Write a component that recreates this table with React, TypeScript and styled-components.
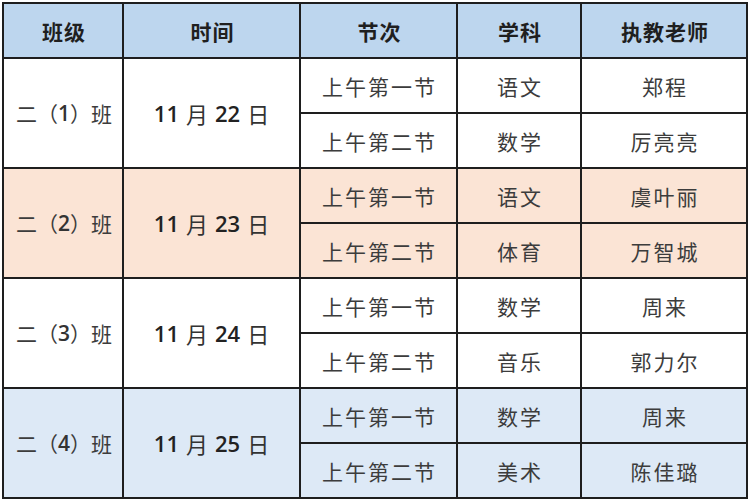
import React from "react";
import styled, { createGlobalStyle } from "styled-components";

const Global = createGlobalStyle`
  html, body { margin: 0; padding: 0; background: #ffffff; }
  body { font-family: "Noto Sans CJK SC", "Noto Sans", sans-serif; }
`;

type Tone = "white" | "pink" | "blue" | "head";

const toneColor: Record<Tone, string> = {
  white: "#ffffff",
  pink: "#fbe4d5",
  blue: "#dde9f6",
  head: "#bdd6ee",
};

const Table = styled.div`
  margin: 2px 0 0 2px;
  width: 746px;
  box-sizing: border-box;
  display: grid;
  grid-template-columns: 118px 175px 155px 122px 164px;
  grid-auto-rows: 53px;
  gap: 2px;
  padding: 2px;
  background: #1e1e1e;
`;

const Cell = styled.div<{ $tone: Tone; $span?: number }>`
  background: ${(p) => toneColor[p.$tone]};
  grid-row: span ${(p) => p.$span ?? 1};
  display: flex;
  align-items: center;
  justify-content: center;
  color: #3c3c3c;
  font-family: "Noto Sans CJK SC", sans-serif;
  font-size: 21px;
  font-weight: 400;
  letter-spacing: 2px;
  padding-left: 2px;
`;

const HeadCell = styled(Cell)`
  color: #1f1f1f;
  font-weight: 700;
  font-size: 21px;
  letter-spacing: 1px;
`;

const DateCell = styled(Cell)`
  color: #222222;
  gap: 7px;
  letter-spacing: 0;
  padding-left: 0;
`;

const Num = styled.span`
  font-family: "Open Sans", sans-serif;
  font-weight: 600;
  font-size: 22px;
  color: #222;
`;

const Word = styled.span`
  font-family: "Noto Sans CJK SC", sans-serif;
  font-weight: 400;
  font-size: 22px;
  color: #333;
`;

const ClassCell = styled(Cell)`
  letter-spacing: 0;
`;

const Digit = styled.span`
  font-family: "Open Sans", sans-serif;
  font-weight: 600;
  color: #333;
`;

const headers = ["班级", "时间", "节次", "学科", "执教老师"];

const groups: {
  cls: string;
  day: string;
  tone: Tone;
  rows: [string, string, string][];
}[] = [
  { cls: "1", day: "22", tone: "white", rows: [["上午第一节", "语文", "郑程"], ["上午第二节", "数学", "厉亮亮"]] },
  { cls: "2", day: "23", tone: "pink", rows: [["上午第一节", "语文", "虞叶丽"], ["上午第二节", "体育", "万智城"]] },
  { cls: "3", day: "24", tone: "white", rows: [["上午第一节", "数学", "周来"], ["上午第二节", "音乐", "郭力尔"]] },
  { cls: "4", day: "25", tone: "blue", rows: [["上午第一节", "数学", "周来"], ["上午第二节", "美术", "陈佳璐"]] },
];

export default function App() {
  return (
    <>
      <Global />
      <Table>
        {headers.map((h) => (
          <HeadCell key={h} $tone="head">{h}</HeadCell>
        ))}
        {groups.map((g) => (
          <React.Fragment key={g.cls}>
            <ClassCell $tone={g.tone} $span={2}>
              二（<Digit>{g.cls}</Digit>）班
            </ClassCell>
            <DateCell $tone={g.tone} $span={2}>
              <Num>11</Num>
              <Word>月</Word>
              <Num>{g.day}</Num>
              <Word>日</Word>
            </DateCell>
            {g.rows.map((r, i) => (
              <React.Fragment key={i}>
                <Cell $tone={g.tone}>{r[0]}</Cell>
                <Cell $tone={g.tone}>{r[1]}</Cell>
                <Cell $tone={g.tone}>{r[2]}</Cell>
              </React.Fragment>
            ))}
          </React.Fragment>
        ))}
      </Table>
    </>
  );
}
